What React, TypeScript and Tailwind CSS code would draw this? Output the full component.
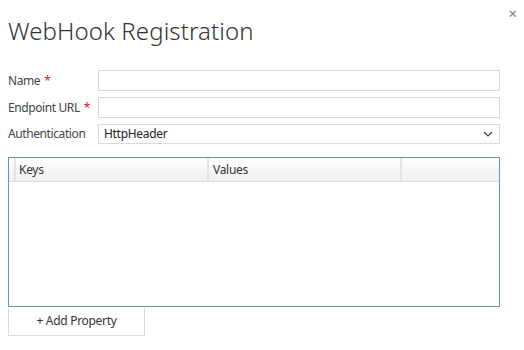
import React from 'react';

const labelCls = 'w-[90px] shrink-0 text-[12px] tracking-[-0.4px] text-[#444]';
const inputCls =
  'h-[21px] flex-1 border border-[#d9d9d9] bg-white px-[6px] text-[12px] text-[#333] outline-none';

function Field({ label, required }: { label: string; required?: boolean }) {
  return (
    <div className="flex items-center">
      <div className={labelCls}>
        {label}
        {required && <span className="ml-[4px] text-[#e81123]">*</span>}
      </div>
      <input className={inputCls} />
    </div>
  );
}

export default function App() {
  return (
    <div
      className="relative h-[350px] w-[524px] overflow-hidden bg-white pl-2 pr-6 pt-[14px]"
      style={{ fontFamily: '"Segoe UI", "Noto Sans", sans-serif' }}
    >
      <button className="absolute right-[7px] top-[6px] text-[15px] leading-none text-[#777]">
        ×
      </button>

      <h1 className="text-[24px] font-light leading-[34px] tracking-[0.1px] text-[#333]">
        WebHook Registration
      </h1>

      <div className="mt-[22px] flex flex-col gap-[6px]">
        <Field label="Name" required />
        <Field label="Endpoint URL" required />
        <div className="flex items-center">
          <div className={labelCls}>Authentication</div>
          <div className="flex h-[20px] flex-1 items-center justify-between border border-[#d9d9d9] pl-[5px] pr-[6px] text-[12px] tracking-[-0.3px] text-[#222]">
            <span>HttpHeader</span>
            <svg width="10" height="6" viewBox="0 0 10 6" fill="none">
              <path d="M1 1l4 4 4-4" stroke="#444" strokeWidth="1.2" />
            </svg>
          </div>
        </div>
      </div>

      <div className="mt-[13px] h-[150px] border border-[#6d8fb8]">
        <div className="flex h-[24px] border-b border-[#d8dadd] bg-gradient-to-b from-white to-[#eef0f3] text-[12px] tracking-[-0.3px] text-[#333]">
          <div className="w-[7px] border-r-2 border-[#e4e4e4]" />
          <div className="flex w-[193px] items-center border-r-2 border-[#e4e4e4] pl-[3px]">
            Keys
          </div>
          <div className="flex w-[193px] items-center border-r-2 border-[#e4e4e4] pl-[4px]">
            Values
          </div>
          <div className="flex-1" />
        </div>
      </div>

      <button className="h-[28px] w-[137px] border border-t-0 border-[#d9d9d9] text-[12px] tracking-[-0.3px] text-[#333]">
        + Add Property
      </button>
    </div>
  );
}
